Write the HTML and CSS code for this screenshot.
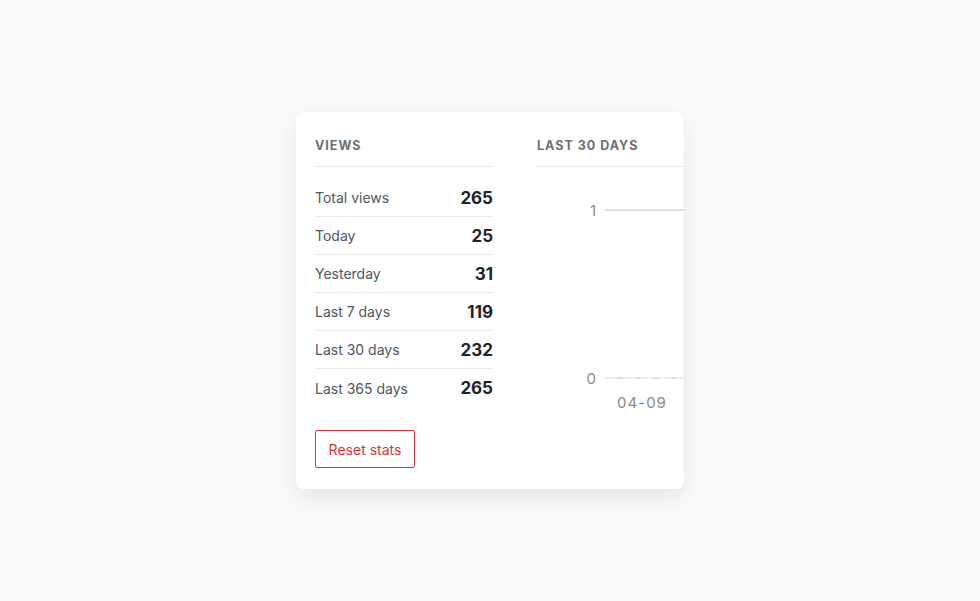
FILE: index.html
```html
<!DOCTYPE html>
<html lang="en">
<head>
    <meta charset="UTF-8">
    <meta name="viewport" content="width=device-width, initial-scale=1.0">
    <title>Views</title>
    <link rel="stylesheet" href="styles.css">
</head>
<body>
    <div class="card">
        <div class="views">
            <h3 class="heading">Views</h3>
            <ul class="stats">
                <li><span>Total views</span><b>265</b></li>
                <li><span>Today</span><b>25</b></li>
                <li><span>Yesterday</span><b>31</b></li>
                <li><span>Last 7 days</span><b>119</b></li>
                <li><span>Last 30 days</span><b>232</b></li>
                <li><span>Last 365 days</span><b>265</b></li>
            </ul>
            <button class="reset">Reset stats</button>
        </div>
        <div class="chart">
            <h3 class="heading">Last 30 days</h3>
            <svg class="graph" width="220" height="260" viewBox="0 0 220 260">
                <text x="59" y="49" text-anchor="end" class="axis">1</text>
                <line x1="68" y1="43" x2="220" y2="43" class="grid"/>
                <text x="59" y="217" text-anchor="end" class="axis">0</text>
                <line x1="68" y1="211" x2="220" y2="211" class="grid"/>
                <line x1="68" y1="211" x2="220" y2="211" class="zero"/>
                <text x="105" y="241" text-anchor="middle" class="axis date">04-09</text>
            </svg>
        </div>
    </div>
</body>
</html>
```

FILE: styles.css
```css
body { margin: 0; min-height: 100vh; display: flex; align-items: center; justify-content: center; background: #fafafa; font-family: Inter, "Noto Sans", sans-serif; color: #50575e; }
.card { width: 388px; height: 377px; box-sizing: border-box; background: white; border-radius: 6px; box-shadow: 0 0 1px rgba(0,0,0,0.12), 0 10px 24px rgba(0,0,0,0.08); padding: 26px 0 0 19px; display: flex; gap: 44px; overflow: hidden; }
.views { width: 178px; flex-shrink: 0; }
.chart { width: 260px; flex-shrink: 0; }
.heading { margin: 0; font-size: 12.5px; line-height: 15px; font-weight: 700; letter-spacing: 1px; text-transform: uppercase; color: #6b7075; padding-bottom: 13px; border-bottom: 1px solid #ececec; }
.stats { list-style: none; margin: 12px 0 0; padding: 0; }
.stats li { display: flex; justify-content: space-between; align-items: center; height: 38px; box-sizing: border-box; border-bottom: 1px solid #ececec; font-size: 14px; }
.stats li:last-child { border-bottom: none; }
.stats b { font-size: 17px; font-weight: 700; color: #1d2327; }
.reset { margin-top: 23px; width: 100px; height: 38px; background: white; border: 1px solid #d63638; border-radius: 2px; color: #d63638; font-family: inherit; font-size: 14px; cursor: pointer; }
.graph { display: block; }
.axis { font-size: 15px; fill: #8a8a8a; font-family: Inter, "Noto Sans", sans-serif; }
.date { letter-spacing: 1px; }
.grid { stroke: #dedede; stroke-width: 2; }
.zero { stroke: #eeeeee; stroke-width: 2; stroke-dasharray: 12 6; }
```
